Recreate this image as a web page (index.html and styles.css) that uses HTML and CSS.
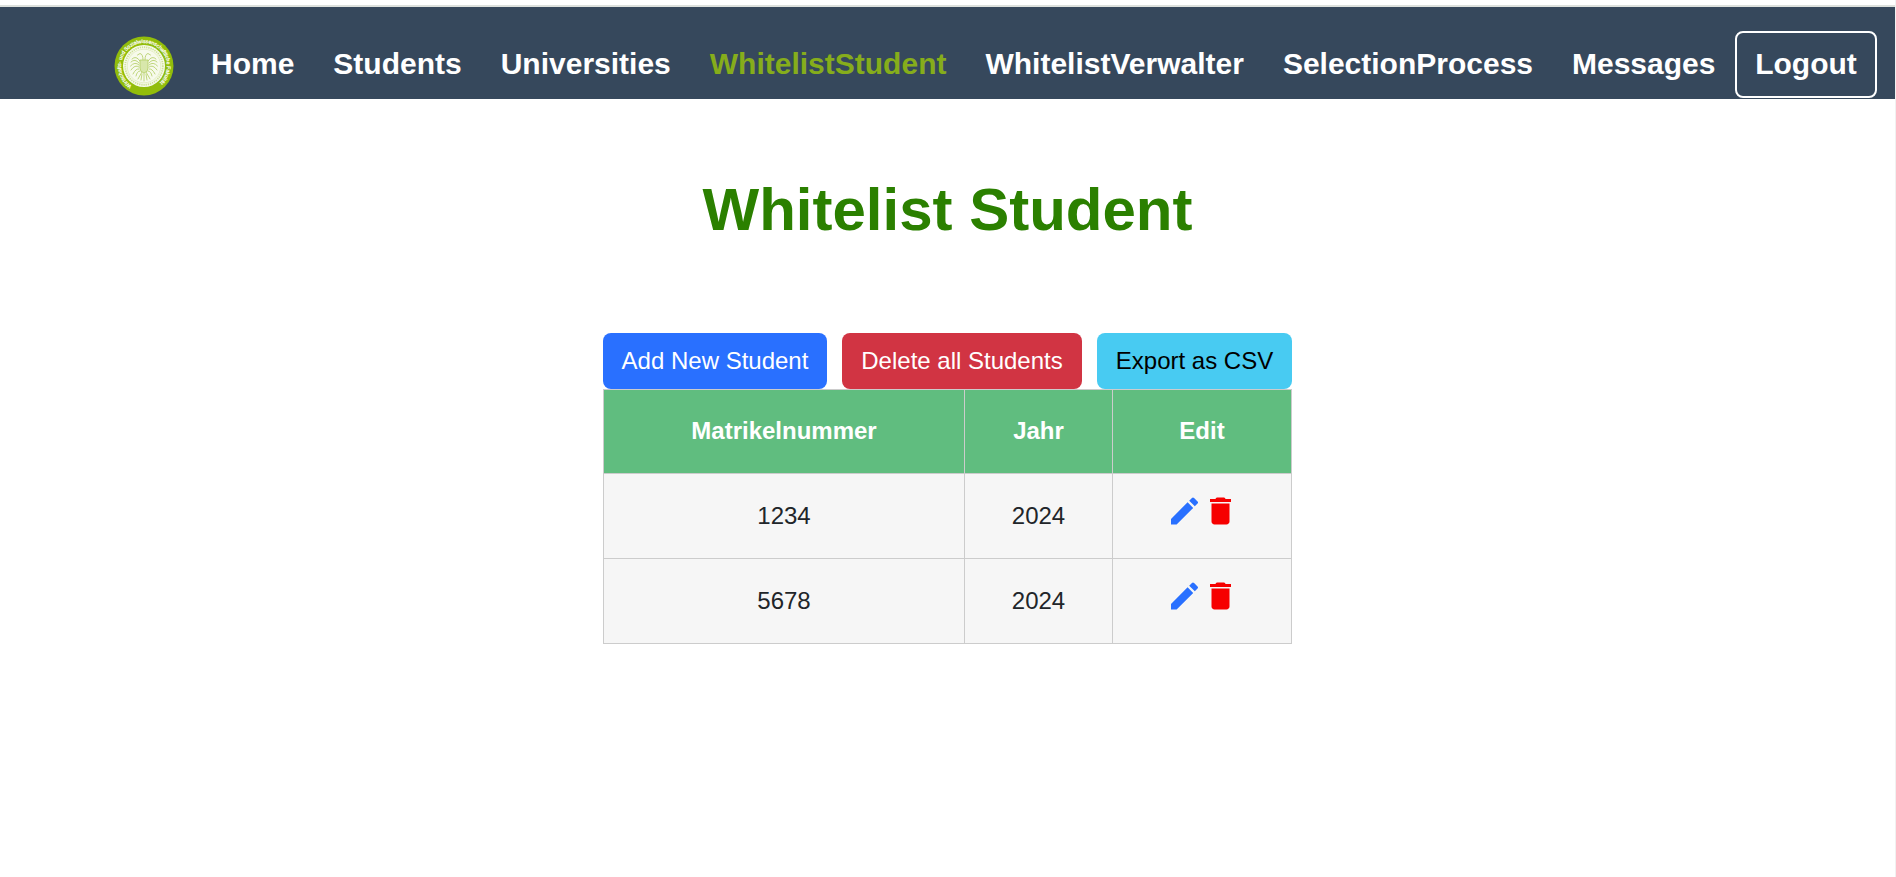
FILE: index.html
```html
<!DOCTYPE html>
<html lang="en">
<head>
<meta charset="utf-8">
<title>Whitelist Student</title>
<link rel="stylesheet" href="styles.css">
</head>
<body>
<svg class="defs" width="0" height="0" aria-hidden="true">
  <symbol id="edit" viewBox="0 0 24 24"><path d="M3 17.25V21h3.75L17.81 9.94l-3.75-3.75L3 17.25zM20.71 7.04a1 1 0 0 0 0-1.41l-2.34-2.34a1 1 0 0 0-1.41 0l-1.83 1.83 3.75 3.75 1.83-1.83z"/></symbol>
  <symbol id="trash" viewBox="0 0 24 24"><path d="M6 19c0 1.1.9 2 2 2h8c1.1 0 2-.9 2-2V7H6v12zM19 4h-3.5l-1-1h-5l-1 1H5v2h14V4z"/></symbol>
</svg>
<header class="navbar">
  <svg class="logo" viewBox="-30 -30 60 60">
    <defs><path id="ring" d="M-12.2 19.5A23 23 0 1 1 12.2 19.5"/></defs>
    <circle r="29.5" fill="#92bd0b"/>
    <circle r="21" fill="#f7faec"/>
    <circle r="18.8" fill="none" stroke="#cfe198" stroke-width="1.8" stroke-dasharray="1.3 .9"/>
    <circle r="16.8" fill="none" stroke="#dce9b5" stroke-width=".7"/>
    <g fill="none" stroke="#bfd67c" stroke-width="1" stroke-linecap="round">
      <path d="M-4-5Q-8-11-12-7M-5-3Q-9-8-13-4M-5-1Q-9-5-13.500 0M-5 1Q-9-2-13 4M-5 3Q-8 2-11 8M-4 5Q-7 5-8 10"/>
      <path d="M4-5Q8-11 12-7M5-3Q9-8 13-4M5-1Q9-5 13.500 0M5 1Q9-2 13 4M5 3Q8 2 11 8M4 5Q7 5 8 10"/>
      <path d="M-1-6Q-1-12-4-12.500L-6.500-11M1-6Q1-12 4-12.500L6.500-11M-2 6L-6 13M2 6L6 13M0 7V15M-2 8L-3 14M2 8L3 14"/>
    </g>
    <path d="M-4-6h8v8q0 4-4 5-4-1-4-5z" fill="#d8e7ab" stroke="#b5cf67" stroke-width=".8"/>
    <text class="logo-text"><textPath href="#ring">Wirtschafts- und Sozialwissenschaftliche Fakultät</textPath></text>
  </svg>
  <nav class="links">
    <a>Home</a><a>Students</a><a>Universities</a><a class="active">WhitelistStudent</a><a>WhitelistVerwalter</a><a>SelectionProcess</a><a>Messages</a>
  </nav>
  <button class="logout">Logout</button>
</header>
<main>
  <h1>Whitelist Student</h1>
  <section class="panel">
    <div class="actions">
      <button class="btn add">Add New Student</button>
      <button class="btn delete">Delete all Students</button>
      <button class="btn export">Export as CSV</button>
    </div>
    <table>
      <colgroup><col class="c-number"><col class="c-year"><col class="c-edit"></colgroup>
      <thead><tr><th>Matrikelnummer</th><th>Jahr</th><th>Edit</th></tr></thead>
      <tbody>
        <tr><td>1234</td><td>2024</td><td><div class="icons"><svg class="edit"><use href="#edit"/></svg><svg class="trash"><use href="#trash"/></svg></div></td></tr>
        <tr><td>5678</td><td>2024</td><td><div class="icons"><svg class="edit"><use href="#edit"/></svg><svg class="trash"><use href="#trash"/></svg></div></td></tr>
      </tbody>
    </table>
  </section>
</main>
</body>
</html>
```
FILE: styles.css
```css
* { box-sizing: border-box; }
html { height: 100%; overflow: hidden; }
body {
  margin: 0;
  height: 877px;
  padding-top: 5px;
  border-right: 1px solid #f1f1f1;
  background: #fff;
  color: #212529;
  font-family: "Liberation Sans", Arial, sans-serif;
  font-size: 24px;
}
.defs { display: block; position: absolute; }
.navbar {
  display: flex;
  align-items: flex-start;
  height: 94px;
  padding: 24px 18px 0 114px;
  border-top: 2px solid #dde1dd;
  background: #36485c;
  color: #fff;
  font-size: 30px;
  font-weight: 700;
}
.logo { width: 60px; height: 60px; margin-top: 5px; flex: none; }
.logo-text { font-size: 5.2px; font-weight: 400; fill: #fff; stroke: #fff; stroke-width: .2px; }
.links { display: flex; gap: 39px; margin-left: 37px; line-height: 66px; }
.active { color: #86ad1b; }
.logout {
  width: 142px;
  height: 67px;
  margin-left: auto;
  padding: 0 0 2px;
  border: 2px solid #fff;
  border-radius: 8px;
  background: none;
  color: inherit;
  font: inherit;
}
h1 {
  margin: 76px 0 0;
  color: #2b8000;
  font-size: 60px;
  line-height: 70px;
  text-align: center;
}
.panel { width: 689px; margin: 88px auto 0; }
.actions { display: flex; justify-content: space-between; }
.btn {
  height: 56px;
  padding: 0;
  border: 0;
  border-radius: 8px;
  color: #fff;
  font: inherit;
}
.add { width: 224px; background: #2970ff; }
.delete { width: 240px; background: #d13443; }
.export { width: 195px; background: #48cbf2; color: #000; }
table { width: 689px; border-collapse: collapse; table-layout: fixed; }
.c-number { width: 361px; }
.c-year { width: 148px; }
.c-edit { width: 179px; }
tr { height: 85px; }
thead tr { height: 84px; }
th, td { padding: 0; border: 1px solid #ccc; text-align: center; vertical-align: middle; }
th { padding-bottom: 2px; background: #60bd7f; color: #fff; }
td { background: #f6f6f6; }
.icons { display: flex; justify-content: center; padding-bottom: 10px; }
.icons svg { width: 36px; height: 36px; }
.icons use { transform: translateX(.5px); }
.edit { fill: #2970ff; }
.trash { fill: #f60000; }
```
